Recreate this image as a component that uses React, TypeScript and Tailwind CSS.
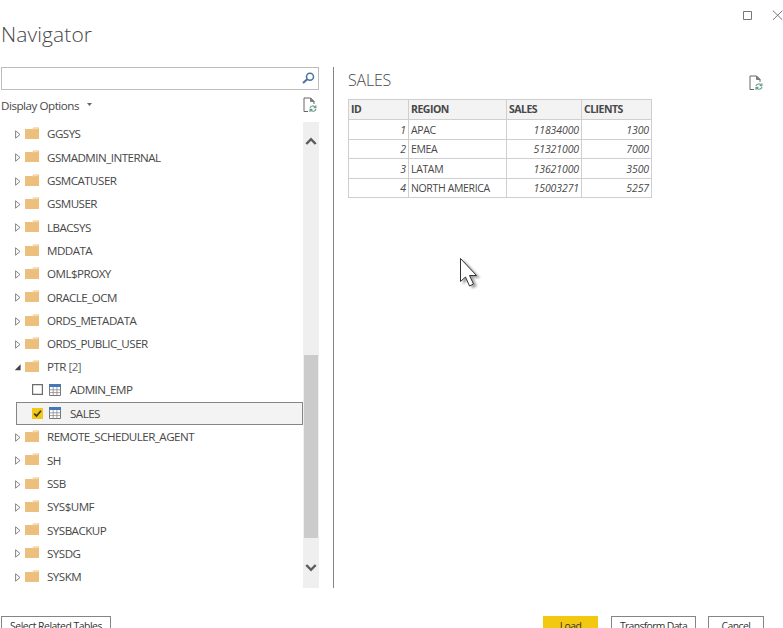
import React from "react";

type TreeNode = { name: string; count?: number; kind: "folder" | "open" | "table"; checked?: boolean };

const nodes: TreeNode[] = [
  { name: "GGSYS", kind: "folder" },
  { name: "GSMADMIN_INTERNAL", kind: "folder" },
  { name: "GSMCATUSER", kind: "folder" },
  { name: "GSMUSER", kind: "folder" },
  { name: "LBACSYS", kind: "folder" },
  { name: "MDDATA", kind: "folder" },
  { name: "OML$PROXY", kind: "folder" },
  { name: "ORACLE_OCM", kind: "folder" },
  { name: "ORDS_METADATA", kind: "folder" },
  { name: "ORDS_PUBLIC_USER", kind: "folder" },
  { name: "PTR", count: 2, kind: "open" },
  { name: "ADMIN_EMP", kind: "table" },
  { name: "SALES", kind: "table", checked: true },
  { name: "REMOTE_SCHEDULER_AGENT", kind: "folder" },
  { name: "SH", kind: "folder" },
  { name: "SSB", kind: "folder" },
  { name: "SYS$UMF", kind: "folder" },
  { name: "SYSBACKUP", kind: "folder" },
  { name: "SYSDG", kind: "folder" },
  { name: "SYSKM", kind: "folder" },
];

const rows = [
  ["1", "APAC", "11834000", "1300"],
  ["2", "EMEA", "51321000", "7000"],
  ["3", "LATAM", "13621000", "3500"],
  ["4", "NORTH AMERICA", "15003271", "5257"],
];

function RefreshPage() {
  return (
    <svg className="block" width="14" height="16" viewBox="0 0 14 16" fill="none">
      <path d="M5 14.5H1V1H7.5L11 4.5V7" stroke="#666" strokeWidth="1" />
      <path d="M7.5 1V4.5H11Z" fill="#888" stroke="#666" strokeWidth=".8" />
      <path d="M7 10.8C7.6 8.6 11 8.2 12.2 10.2M12.9 8.2V10.7H10.6" stroke="#6a9c87" strokeWidth="1.1" />
      <path d="M13 12C12.3 14.6 9 14.9 7.8 12.9M7 15V12.4H9.4" stroke="#6a9c87" strokeWidth="1.1" />
    </svg>
  );
}

function Folder() {
  return (
    <svg className="block" width="14" height="13" viewBox="0 0 14 13">
      <path d="M0 2H7.2L8.6 .6H14V12H0Z" fill="#ecc07c" />
      <path d="M7.8 2.6L9 1.6H13.2" stroke="#f8e3bf" strokeWidth=".9" fill="none" />
    </svg>
  );
}

function TableIcon() {
  return (
    <svg className="block" width="12" height="12" viewBox="0 0 12 12">
      <path d="M.5 .5H11.5V11.5H.5Z" fill="#fff" stroke="#777" />
      <path d="M0 0H12V3H0Z" fill="#4379b8" />
      <path d="M4.2 3V11.5M7.9 3V11.5M.5 5.8H11.5M.5 8.6H11.5" stroke="#8a8a8a" strokeWidth=".8" />
    </svg>
  );
}

function Checkbox({ checked }: { checked?: boolean }) {
  return (
    <svg className="block" width="11" height="11" viewBox="0 0 11 11" fill="none">
      {checked ? (
        <>
          <path d="M0 0H11V11H0Z" fill="#efc81a" />
          <path d="M2.2 5.6L4.5 8L9 2.8" stroke="#40350a" strokeWidth="1.6" />
        </>
      ) : (
        <path d="M.6 .6H10.4V10.4H.6Z" fill="#fff" stroke="#6c6c6c" strokeWidth="1.2" />
      )}
    </svg>
  );
}

function TreeRow({ node }: { node: TreeNode }) {
  if (node.kind === "table") {
    return (
      <li className={"ml-[15px] flex items-center border pl-[15px] " + (node.checked ? "border-[#858585] bg-[#f3f3f3]" : "border-transparent")}>
        <Checkbox checked={node.checked} />
        <span className="ml-1.5"><TableIcon /></span>
        <span className="ml-[9px]">{node.name}</span>
      </li>
    );
  }
  return (
    <li className="flex items-center pl-3.5">
      <svg className="mr-1 mt-0.5 block" width="6" height="9" viewBox="0 0 6 9" fill="none">
        {node.kind === "open" ? (
          <path d="M5.6 1.3V7.2H-.3Z" fill="#444" />
        ) : (
          <path d="M.6 .8L5 4.5L.6 8.2Z" stroke="#777" strokeWidth=".9" />
        )}
      </svg>
      <Folder />
      <span className="ml-2 pt-px">
        {node.name}
        {node.count && <span className="text-[#666]"> [{node.count}]</span>}
      </span>
    </li>
  );
}

export default function App() {
  return (
    <div className="relative flex h-[628px] w-[783px] flex-col overflow-hidden bg-white font-['Open_Sans','Noto_Sans',sans-serif] text-[11.6px] tracking-[-0.52px] text-[#484848]">
      <header className="flex h-[67px] shrink-0 justify-between pl-px">
        <h1 className="mt-[18px] text-[21px] font-light leading-8 tracking-[0.1px] text-[#484848]">Navigator</h1>
        <svg className="mt-[10px] block" width="41" height="11" viewBox="0 0 41 11" fill="none" stroke="#777">
          <path d="M1.5 1.5H9.5V9.5H1.5Z" />
          <path d="M31 .7L40.3 9.8M40.3 .7L31 9.8" />
        </svg>
      </header>

      <main className="flex h-[521px] shrink-0">
        <section className="ml-px flex w-[318px] flex-col">
          <div className="flex h-[23px] shrink-0 items-center justify-end border border-[#bdbdbd] pr-[3px]">
            <svg className="mb-0.5 block" width="13" height="12" viewBox="0 0 13 12" fill="none" stroke="#49749f">
              <circle cx="8" cy="4.7" r="3.5" strokeWidth="1.5" />
              <path d="M5.3 7.2L1 11" strokeWidth="2.1" />
            </svg>
          </div>
          <div className="flex h-8 shrink-0 items-center justify-between pr-0.5">
            <div className="flex items-center tracking-[-0.46px]">
              Display Options
              <svg className="mb-0.5 ml-2 block" width="5" height="3" viewBox="0 0 5 3"><path d="M0 0H5L2.5 3Z" fill="#666" /></svg>
            </div>
            <div className="-mt-0.5"><RefreshPage /></div>
          </div>
          <div className="flex h-[466px] shrink-0">
            <ul className="grid w-[302px] auto-rows-[23.3px] whitespace-nowrap">
              {nodes.map((n) => <TreeRow key={n.name} node={n} />)}
            </ul>
            <div className="flex w-4 flex-col items-center bg-[#efefef]">
              <svg className="mt-[15px] block" width="12" height="9" viewBox="0 0 12 9" fill="none"><path d="M1.3 7L6 2.2L10.7 7" stroke="#5c5c5c" strokeWidth="2.5" /></svg>
              <div className="mt-[209px] h-[183px] w-3.5 bg-[#cbcbcb]" />
              <svg className="mt-[25px] block" width="12" height="9" viewBox="0 0 12 9" fill="none"><path d="M1.3 2L6 6.8L10.7 2" stroke="#5c5c5c" strokeWidth="2.5" /></svg>
            </div>
          </div>
        </section>

        <div className="ml-3.5 w-px bg-[#858585]" />

        <section className="ml-3.5 flex-1">
          <div className="flex h-8 justify-between pr-5">
            <h2 className="text-[16px] font-light leading-[27px] tracking-[-0.2px] text-[#484848]">SALES</h2>
            <div className="mt-2"><RefreshPage /></div>
          </div>
          <table className="w-[303px] table-fixed border-collapse text-[10.5px] leading-none tracking-[-0.35px]">
            <colgroup>
              <col className="w-[60px]" /><col className="w-[98px]" /><col className="w-[75px]" /><col className="w-[70px]" />
            </colgroup>
            <thead>
              <tr className="h-5 bg-[#f3f3f3] text-left tracking-[-0.5px]">
                {["ID", "REGION", "SALES", "CLIENTS"].map((h) => (
                  <th key={h} className="border border-[#cfcfcf] px-0.5 font-bold">{h}</th>
                ))}
              </tr>
            </thead>
            <tbody>
              {rows.map((r) => (
                <tr key={r[0]} className="h-[19.6px]">
                  {r.map((v, i) => (
                    <td key={i} className={"whitespace-nowrap border border-[#cfcfcf] pt-px " + (i === 1 ? "px-0.5" : "pr-0.5 text-right font-medium italic tracking-[-0.1px]")}>{v}</td>
                  ))}
                </tr>
              ))}
            </tbody>
          </table>
        </section>
      </main>

      <footer className="mt-7 flex shrink-0 whitespace-nowrap pl-px text-[10.4px] tracking-[-0.55px] text-[#333]">
        <button className="h-[22px] w-[110px] border border-[#858585] tracking-[-0.48px]">Select Related Tables</button>
        <button className="ml-[432px] h-[22px] w-[55px] bg-[#f2c811]">Load</button>
        <button className="ml-[13px] h-[22px] w-[85px] border border-[#858585] tracking-[-0.65px]">Transform Data</button>
        <button className="ml-[12px] h-[22px] w-[56px] border border-[#858585]">Cancel</button>
      </footer>

      <svg className="absolute left-[458px] top-[256px] drop-shadow-[3px_2px_1px_rgba(0,0,0,0.35)]" width="24" height="34" viewBox="0 0 24 34">
        <path d="M2.5 2.5V25.5L7.5 21L11.5 30L15.5 28L11.5 19.5H18.5Z" fill="#fff" stroke="#333" strokeWidth="1" />
      </svg>
    </div>
  );
}
